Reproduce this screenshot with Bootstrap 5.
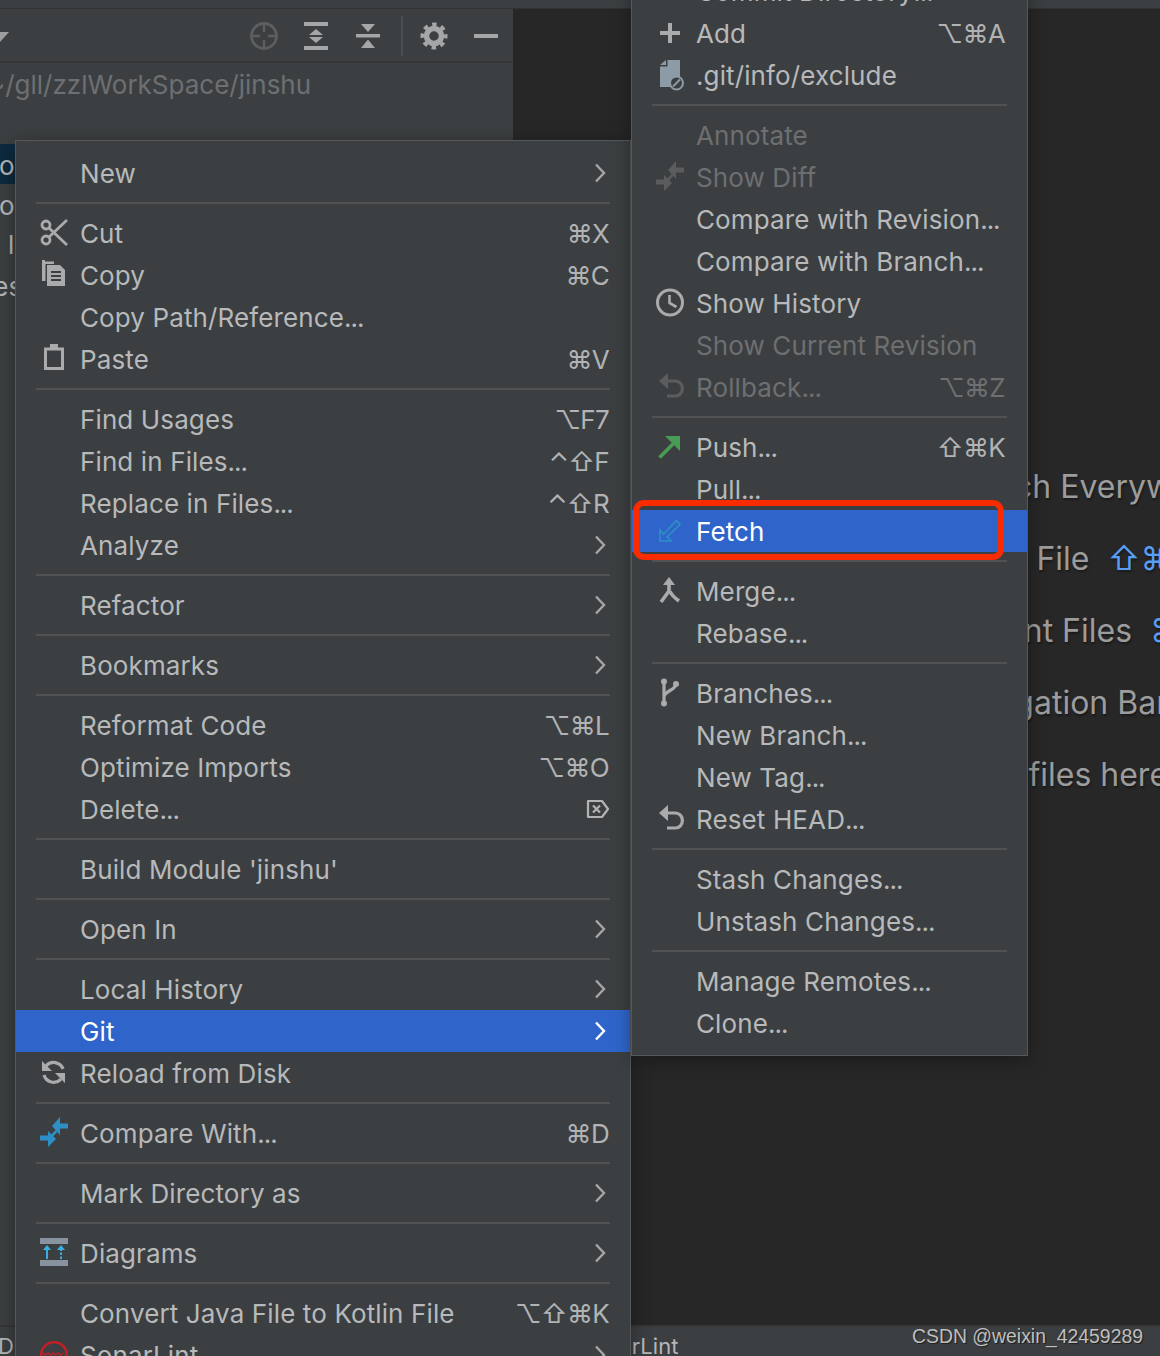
<!DOCTYPE html>
<html lang="en">
<head>
<meta charset="utf-8">
<title>IDE Git menu</title>
<link href="https://cdn.jsdelivr.net/npm/bootstrap@5.3.0/dist/css/bootstrap.min.css" rel="stylesheet">
<style>
html,body{height:100%;}
body{background:#272727;font-family:Inter,"DejaVu Sans",sans-serif;overflow:hidden;}
.stage{width:1160px;height:1356px;position:relative;overflow:hidden;background:#272727;}
.top-strip{height:9px;background:#3c3f41;border-bottom:1px solid #323232;}
.main-area{height:1316px;}
.left-pane{width:513px;background:#3c3f41;flex:none;}
.tool-bar{height:54px;border-bottom:2px solid #343638;padding-top:1px;}
.tool-ic{position:relative;color:#a4a6a8;display:block;overflow:visible;flex:none;}
.tool-bar .tool-ic{width:28px;height:28px;}
.ic-dim{color:#5c5e60;margin-left:250px;}
.ic-exp{margin-left:24px;}.ic-col{margin-left:24px;}
.ic-gear{margin-left:17px;}.ic-min{margin-left:24px;}
.tool-sep{width:2px;height:40px;background:#4c4e50;margin-left:19px;}
.tri{width:0;height:0;border-top:10px solid #9b9d9f;border-right:9px solid transparent;position:absolute;left:0;top:23px;}
.path-line{height:44px;line-height:44px;color:#6d7072;font-size:26px;white-space:nowrap;margin-left:-12px;}
.tree{margin-top:37px;color:#b5b7b9;font-size:26px;}
.tree-row{height:42px;line-height:42px;white-space:nowrap;overflow:hidden;}
.tree-sel{background:#0d293e;height:40px;line-height:44px;}
.tree-o2{height:40px;line-height:44px;}
.tree-i1{margin-left:-1px;}
.tree-i2{padding-left:8px;}
.tree-i3{margin-left:-16px;}
.editor-pane{flex:1;min-width:0;overflow:hidden;padding-top:442px;color:#9c9c9c;font-size:32px;text-shadow:1px 2px 2px #1a1a1a;}
.ed-row{height:72px;line-height:72px;white-space:nowrap;}
.ed-a{margin-left:432px;}.ed-b{margin-left:433px;}.ed-c{margin-left:435px;}.ed-d{margin-left:434px;}.ed-e{margin-left:433px;}
.kbd-blue{color:#589df6;margin-left:18px;}
.status-bar{height:31px;background:#3c3f41;border-top:2px solid #343638;color:#b5b7b9;font-size:22px;line-height:38px;white-space:nowrap;overflow:hidden;}
.st-a{margin-left:-2px;}
.st-b{margin-left:552px;}
.watermark{position:absolute;right:17px;top:1324px;font-family:"Liberation Sans",Arial,sans-serif;font-size:19.4px;line-height:24px;color:#bfbfbf;text-shadow:1px 1px 1px #1c1c1c;white-space:nowrap;}
.ide-menu{
  --bs-dropdown-bg:#3c3f41;--bs-dropdown-border-color:#555759;--bs-dropdown-border-width:1px;--bs-dropdown-border-radius:0;
  --bs-dropdown-padding-y:11px;--bs-dropdown-padding-x:0;--bs-dropdown-spacer:0;
  --bs-dropdown-link-color:#b7b9bb;--bs-dropdown-link-hover-color:#b7b9bb;--bs-dropdown-link-hover-bg:transparent;
  --bs-dropdown-link-active-color:#fff;--bs-dropdown-link-active-bg:#2f65ca;--bs-dropdown-link-disabled-color:#6d6f71;
  --bs-dropdown-divider-bg:#505254;--bs-dropdown-divider-margin-y:8px;
  --bs-dropdown-item-padding-x:0;--bs-dropdown-item-padding-y:0;
  box-shadow:0 4px 18px rgba(0,0,0,.35);font-size:26px;
}
.menu-main{position:absolute;left:15px;top:140px;width:616px;height:1260px;}
.menu-git{position:absolute;left:631px;top:-42px;width:397px;}
.ide-menu .dropdown-item{height:42px;line-height:42px;display:flex;align-items:center;padding:0 20px 0 24px;white-space:nowrap;}
.menu-git .dropdown-item{padding-right:21px;}
.ide-menu hr.dropdown-divider{border-top-width:2px;margin-left:20px;margin-right:20px;opacity:1;}
.ic-slot{width:28px;height:28px;flex:none;margin-right:12px;overflow:visible;color:#a9abad;}
.ic-none{width:28px;height:28px;flex:none;margin-right:12px;}
.ic-off{color:#5a5c5e;}
.ic-blue{color:#2e8fc6;}
.ic-green{color:#499c54;}
.lbl{flex:1;min-width:0;letter-spacing:.12px;margin-top:2px;}
.dt{letter-spacing:-1px;}
.keys{color:#b1b3b5;font-size:26px;letter-spacing:-.7px;margin-top:2px;margin-right:1px;}
.disabled .keys{color:#6d6f71;}
.chev{width:12px;height:20px;margin-right:4px;flex:none;color:#a4a6a8;overflow:visible;}
.active .chev{color:#fff;}
.del-key{width:24px;height:20px;overflow:visible;color:#b1b3b5;flex:none;}
.red-box{position:absolute;left:633px;top:500px;width:371px;height:60px;border:6px solid #f92b00;border-radius:11px;z-index:1100;}
</style>
</head>
<body>
<svg class="d-none" xmlns="http://www.w3.org/2000/svg">
  <symbol id="s-cmp" viewBox="0 0 28 28" overflow="visible">
    <path fill="currentColor" d="M12 7l8-9v6.500h8v5h-8V16zM16 20l-8 8v-6.500H0v-5h8V12z"/>
    <path fill="none" stroke="currentColor" stroke-width="2.500" d="M16.500 12l-5 5"/>
  </symbol>
  <symbol id="s-back" viewBox="0 0 28 28" overflow="visible">
    <path fill="currentColor" d="M3 8l9-8v16z"/>
    <path fill="none" stroke="currentColor" stroke-width="3.200" d="M9 8h10.500a6.900 7.500 0 0 1 0 15H11"/>
  </symbol>
  <symbol id="s-chev" viewBox="0 0 12 20" overflow="visible">
    <path fill="none" stroke="currentColor" stroke-width="2.400" d="M2 1.500l8 8.500-8 8.500"/>
  </symbol>
</svg>
<div class="stage">
  <div class="top-strip"></div>
  <div class="main-area d-flex">
    <div class="left-pane position-relative">
      <div class="tool-bar d-flex align-items-center position-relative">
        <span class="tri"></span>
        <svg class="tool-ic ic-dim" viewBox="0 0 28 28"><circle cx="14" cy="14" r="12.500" fill="none" stroke="currentColor" stroke-width="2.800"/><path stroke="currentColor" stroke-width="2.500" d="M14 2v8M14 18v8M2 14h8M18 14h8"/></svg>
        <svg class="tool-ic ic-exp" viewBox="0 0 28 28"><path fill="currentColor" d="M2 0h24v4H2zM2 24h24v4H2zM14 7l7 6H7zM14 21l-7-6h14z"/></svg>
        <svg class="tool-ic ic-col" viewBox="0 0 28 28"><path fill="currentColor" d="M2 12h24v3.500H2zM14 10L7 2h14zM14 17.500L21 26H7z"/></svg>
        <span class="tool-sep"></span>
        <svg class="tool-ic ic-gear" viewBox="0 0 28 28"><circle cx="14" cy="14" r="7.500" fill="none" stroke="currentColor" stroke-width="5.500"/><circle cx="14" cy="14" r="11.500" fill="none" stroke="currentColor" stroke-width="4" stroke-dasharray="4.500 4.530" stroke-dashoffset="2.200"/></svg>
        <svg class="tool-ic ic-min" viewBox="0 0 28 28"><path fill="currentColor" d="M2 12h24v4H2z"/></svg>
      </div>
      <div class="path-line">~/gll/zzlWorkSpace/jinshu</div>
      <div class="tree">
        <div class="tree-row tree-sel tree-i1">o</div>
        <div class="tree-row tree-o2 tree-i1">o</div>
        <div class="tree-row tree-i2">l</div>
        <div class="tree-row tree-i3">res</div>
      </div>
    </div>
    <div class="editor-pane">
      <div class="ed-row ed-a">Search Everywhere</div>
      <div class="ed-row ed-b">Go to File<span class="kbd-blue">⇧⌘N</span></div>
      <div class="ed-row ed-c">Recent Files<span class="kbd-blue">⌘E</span></div>
      <div class="ed-row ed-d">Navigation Bar</div>
      <div class="ed-row ed-e">Drop files here to open</div>
    </div>
  </div>
  <div class="status-bar d-flex">
    <span class="st-a">Do</span>
    <span class="st-b">SonarLint</span>
  </div>
  <div class="watermark">CSDN @weixin_42459289</div>

  <ul class="dropdown-menu show ide-menu menu-main">
    <li><a class="dropdown-item"><span class="ic-none"></span><span class="lbl">New</span><svg class="chev"><use href="#s-chev"/></svg></a></li>
    <li><hr class="dropdown-divider"></li>
    <li><a class="dropdown-item"><svg class="ic-slot" viewBox="0 0 28 28"><g fill="none" stroke="currentColor" stroke-width="2.800"><circle cx="6" cy="6" r="4"/><circle cx="6" cy="21" r="4"/><path d="M9 9l18 17M9 18L27 1"/></g></svg><span class="lbl">Cut</span><span class="keys">⌘X</span></a></li>
    <li><a class="dropdown-item"><svg class="ic-slot" viewBox="0 0 28 28"><path fill="currentColor" d="M2-1h3v1.500h9V3H5.500v17H2zM7 4h13l5 5v16H7z"/><path stroke="#3c3f41" stroke-width="1.800" d="M11 11h10M11 15h10M11 19h10"/></svg><span class="lbl">Copy</span><span class="keys">⌘C</span></a></li>
    <li><a class="dropdown-item"><span class="ic-none"></span><span class="lbl">Copy Path/Reference<span class="dt">...</span></span></a></li>
    <li><a class="dropdown-item"><svg class="ic-slot" viewBox="0 0 28 28"><path fill="none" stroke="currentColor" stroke-width="3" d="M5.500 4h17v19.500h-17z"/><path fill="currentColor" d="M10-1h8v6h-8z"/></svg><span class="lbl">Paste</span><span class="keys">⌘V</span></a></li>
    <li><hr class="dropdown-divider"></li>
    <li><a class="dropdown-item"><span class="ic-none"></span><span class="lbl">Find Usages</span><span class="keys">⌥F7</span></a></li>
    <li><a class="dropdown-item"><span class="ic-none"></span><span class="lbl">Find in Files<span class="dt">...</span></span><span class="keys">⌃⇧F</span></a></li>
    <li><a class="dropdown-item"><span class="ic-none"></span><span class="lbl">Replace in Files<span class="dt">...</span></span><span class="keys">⌃⇧R</span></a></li>
    <li><a class="dropdown-item"><span class="ic-none"></span><span class="lbl">Analyze</span><svg class="chev"><use href="#s-chev"/></svg></a></li>
    <li><hr class="dropdown-divider"></li>
    <li><a class="dropdown-item"><span class="ic-none"></span><span class="lbl">Refactor</span><svg class="chev"><use href="#s-chev"/></svg></a></li>
    <li><hr class="dropdown-divider"></li>
    <li><a class="dropdown-item"><span class="ic-none"></span><span class="lbl">Bookmarks</span><svg class="chev"><use href="#s-chev"/></svg></a></li>
    <li><hr class="dropdown-divider"></li>
    <li><a class="dropdown-item"><span class="ic-none"></span><span class="lbl">Reformat Code</span><span class="keys">⌥⌘L</span></a></li>
    <li><a class="dropdown-item"><span class="ic-none"></span><span class="lbl">Optimize Imports</span><span class="keys">⌥⌘O</span></a></li>
    <li><a class="dropdown-item"><span class="ic-none"></span><span class="lbl">Delete<span class="dt">...</span></span><svg class="del-key" viewBox="0 0 24 20"><path fill="none" stroke="currentColor" stroke-width="2.200" stroke-linejoin="round" d="M2 2h14l6 8-6 8H2z"/><path stroke="currentColor" stroke-width="2.200" d="M7 6.500l7 7M14 6.500l-7 7"/></svg></a></li>
    <li><hr class="dropdown-divider"></li>
    <li><a class="dropdown-item"><span class="ic-none"></span><span class="lbl">Build Module 'jinshu'</span></a></li>
    <li><hr class="dropdown-divider"></li>
    <li><a class="dropdown-item"><span class="ic-none"></span><span class="lbl">Open In</span><svg class="chev"><use href="#s-chev"/></svg></a></li>
    <li><hr class="dropdown-divider"></li>
    <li><a class="dropdown-item"><span class="ic-none"></span><span class="lbl">Local History</span><svg class="chev"><use href="#s-chev"/></svg></a></li>
    <li><a class="dropdown-item active"><span class="ic-none"></span><span class="lbl">Git</span><svg class="chev"><use href="#s-chev"/></svg></a></li>
    <li><a class="dropdown-item"><svg class="ic-slot" viewBox="0 0 28 28"><g fill="none" stroke="currentColor" stroke-width="3.200"><path d="M23 10A10 10 0 0 0 6 7"/><path d="M4 16a10 10 0 0 0 17 4"/></g><path fill="currentColor" d="M2 2v10h10zM25 24V14H15z"/></svg><span class="lbl">Reload from Disk</span></a></li>
    <li><hr class="dropdown-divider"></li>
    <li><a class="dropdown-item"><svg class="ic-slot ic-blue"><use href="#s-cmp"/></svg><span class="lbl">Compare With<span class="dt">...</span></span><span class="keys">⌘D</span></a></li>
    <li><hr class="dropdown-divider"></li>
    <li><a class="dropdown-item"><span class="ic-none"></span><span class="lbl">Mark Directory as</span><svg class="chev"><use href="#s-chev"/></svg></a></li>
    <li><hr class="dropdown-divider"></li>
    <li><a class="dropdown-item"><svg class="ic-slot" viewBox="0 0 28 28"><path fill="#87939e" d="M0-1h28v6H0zM0 21h28v6H0z"/><path fill="none" stroke="#3bb0e0" stroke-width="2" d="M7 20V10"/><path fill="none" stroke="#3bb0e0" stroke-width="2" stroke-dasharray="2.500 1.500" d="M21 20V10"/><path fill="#3bb0e0" d="M7 6l4 5H3zM21 6l4 5h-8z"/></svg><span class="lbl">Diagrams</span><svg class="chev"><use href="#s-chev"/></svg></a></li>
    <li><hr class="dropdown-divider"></li>
    <li><a class="dropdown-item"><span class="ic-none"></span><span class="lbl">Convert Java File to Kotlin File</span><span class="keys">⌥⇧⌘K</span></a></li>
    <li><a class="dropdown-item"><svg class="ic-slot" viewBox="0 0 28 28"><circle cx="14" cy="14" r="12.800" fill="none" stroke="#bf2026" stroke-width="2.600"/><path fill="none" stroke="#bf2026" stroke-width="1.500" d="M3 12l2.500 2 2.500-2 2.500 2 2.500-2 2.500 2 2.500-2 2.500 2 2.500-2"/></svg><span class="lbl">SonarLint</span><svg class="chev"><use href="#s-chev"/></svg></a></li>
  </ul>

  <ul class="dropdown-menu show ide-menu menu-git">
    <li><a class="dropdown-item"><span class="ic-none"></span><span class="lbl">Commit Directory<span class="dt">...</span></span></a></li>
    <li><a class="dropdown-item"><svg class="ic-slot" viewBox="0 0 28 28"><path fill="currentColor" d="M12 4h4v8h8v4h-8v8h-4v-8H4v-4h8z"/></svg><span class="lbl">Add</span><span class="keys">⌥⌘A</span></a></li>
    <li><a class="dropdown-item"><svg class="ic-slot" viewBox="0 0 28 28"><path fill="#8d9ba6" d="M4 5.500h7.500V-1H24v27H4zM4 4l6-5v5z"/><circle cx="20.500" cy="22" r="6.500" fill="#3c3f41" stroke="#8d9ba6" stroke-width="2"/><path stroke="#8d9ba6" stroke-width="2" d="M17 25.500l7-7"/></svg><span class="lbl">.git/info/exclude</span></a></li>
    <li><hr class="dropdown-divider"></li>
    <li><a class="dropdown-item disabled"><span class="ic-none"></span><span class="lbl">Annotate</span></a></li>
    <li><a class="dropdown-item disabled"><svg class="ic-slot ic-off"><use href="#s-cmp"/></svg><span class="lbl">Show Diff</span></a></li>
    <li><a class="dropdown-item"><span class="ic-none"></span><span class="lbl">Compare with Revision<span class="dt">...</span></span></a></li>
    <li><a class="dropdown-item"><span class="ic-none"></span><span class="lbl">Compare with Branch<span class="dt">...</span></span></a></li>
    <li><a class="dropdown-item"><svg class="ic-slot" viewBox="0 0 28 28"><circle cx="14" cy="13.500" r="12.500" fill="none" stroke="currentColor" stroke-width="3"/><path fill="none" stroke="currentColor" stroke-width="2.600" d="M13.500 6v8l7 4"/></svg><span class="lbl">Show History</span></a></li>
    <li><a class="dropdown-item disabled"><span class="ic-none"></span><span class="lbl">Show Current Revision</span></a></li>
    <li><a class="dropdown-item disabled"><svg class="ic-slot ic-off"><use href="#s-back"/></svg><span class="lbl">Rollback<span class="dt">...</span></span><span class="keys">⌥⌘Z</span></a></li>
    <li><hr class="dropdown-divider"></li>
    <li><a class="dropdown-item"><svg class="ic-slot ic-green" viewBox="0 0 28 28"><path fill="none" stroke="currentColor" stroke-width="3.600" d="M3.500 24.500l18-18"/><path fill="currentColor" d="M9 3h15v15z"/></svg><span class="lbl">Push<span class="dt">...</span></span><span class="keys">⇧⌘K</span></a></li>
    <li><a class="dropdown-item"><span class="ic-none"></span><span class="lbl">Pull<span class="dt">...</span></span></a></li>
    <li><a class="dropdown-item active"><svg class="ic-slot ic-blue" viewBox="0 0 28 28"><path fill="none" stroke="currentColor" stroke-width="1.600" d="M4 13v11h11l-4-4L24 7.500 20.500 3.500 7.500 17z"/></svg><span class="lbl">Fetch</span></a></li>
    <li><hr class="dropdown-divider"></li>
    <li><a class="dropdown-item"><svg class="ic-slot" viewBox="0 0 28 28"><path fill="currentColor" d="M13 0l6 8h-4.200v7h-3.600V8H7z"/><path fill="none" stroke="currentColor" stroke-width="3.600" d="M13 14L5 25M14 14.500c2 4 4 6 9 9.500"/></svg><span class="lbl">Merge<span class="dt">...</span></span></a></li>
    <li><a class="dropdown-item"><span class="ic-none"></span><span class="lbl">Rebase<span class="dt">...</span></span></a></li>
    <li><hr class="dropdown-divider"></li>
    <li><a class="dropdown-item"><svg class="ic-slot" viewBox="0 0 28 28"><g fill="currentColor"><circle cx="8" cy="2.500" r="3"/><circle cx="20" cy="5" r="3"/><circle cx="8" cy="24.500" r="3"/></g><path fill="none" stroke="currentColor" stroke-width="3.200" d="M8 2.500v22M20 5c0 6-12 7-12 13"/></svg><span class="lbl">Branches<span class="dt">...</span></span></a></li>
    <li><a class="dropdown-item"><span class="ic-none"></span><span class="lbl">New Branch<span class="dt">...</span></span></a></li>
    <li><a class="dropdown-item"><span class="ic-none"></span><span class="lbl">New Tag<span class="dt">...</span></span></a></li>
    <li><a class="dropdown-item"><svg class="ic-slot"><use href="#s-back"/></svg><span class="lbl">Reset HEAD<span class="dt">...</span></span></a></li>
    <li><hr class="dropdown-divider"></li>
    <li><a class="dropdown-item"><span class="ic-none"></span><span class="lbl">Stash Changes<span class="dt">...</span></span></a></li>
    <li><a class="dropdown-item"><span class="ic-none"></span><span class="lbl">Unstash Changes<span class="dt">...</span></span></a></li>
    <li><hr class="dropdown-divider"></li>
    <li><a class="dropdown-item"><span class="ic-none"></span><span class="lbl">Manage Remotes<span class="dt">...</span></span></a></li>
    <li><a class="dropdown-item"><span class="ic-none"></span><span class="lbl">Clone<span class="dt">...</span></span></a></li>
  </ul>
  <div class="red-box"></div>
</div>
<script src="https://cdn.jsdelivr.net/npm/bootstrap@5.3.0/dist/js/bootstrap.bundle.min.js"></script>
</body>
</html>
